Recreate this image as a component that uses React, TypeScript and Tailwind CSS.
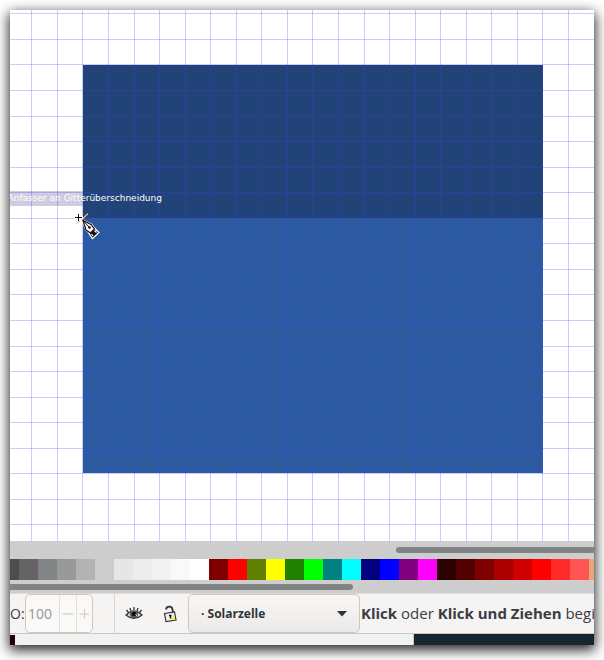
import { Minus, Plus } from "lucide-react";

const PITCH = 25.5556;
const columns = Array.from({ length: 80 }, (_, i) => Math.floor(21.8 + i * PITCH));
const rows = Array.from({ length: 60 }, (_, i) => Math.floor(3.8 + i * PITCH));

const swatches = [
  "#666366", "#808484", "#999999", "#b3b3b3", "#cccccc", "#e6e6e5",
  "#ececec", "#f1f3f2", "#f9f9fc", "#ffffff", "#800000", "#ff0000", "#628000",
  "#ffff00", "#208000", "#00ff00", "#008080", "#00ffff", "#000080", "#0000ff",
  "#800080", "#ff00ff", "#2b0000", "#550000", "#800000", "#aa0000", "#d00000",
  "#ff0000", "#ff2a2a", "#ff5555", "#e9a678", "#deaa87", "#ffccaa",
];

function PenCursor() {
  return (
    <svg className="absolute top-[202px] left-[62px]" width="30" height="30" viewBox="0 0 30 30" aria-hidden="true">
      <path d="M2 5.500h9M6.500 1v9" stroke="#fff" strokeWidth="3" />
      <path d="M3 5.500h7M6.500 2v7" stroke="#1a0808" strokeWidth="1" />
      <path d="M11 6.500l5-5" stroke="#d8c860" strokeWidth="1.200" />
      <path d="M5 11.500l3-3" stroke="#999" strokeWidth="1" />
      <path d="M11 9L19 12.500L23 17.500L19 21.500L14.500 18Z" fill="#fff" stroke="#fff" strokeWidth="2.500" />
      <path d="M22.500 16.500L27 20.500L20.500 26.500L17 21.500Z" fill="#1a0808" stroke="#fff" strokeWidth="1.200" />
      <path d="M11 8.500L19 12.500L22.500 17L18.500 21L14 18Z" fill="#fff" stroke="#1a0808" strokeWidth="1.200" />
      <path d="M11 8.500l6.500 7" stroke="#1a0808" strokeWidth="1" />
      <circle cx="17.500" cy="15.500" r="1.300" fill="#1a0808" />
      <path d="M22.500 18.500l2 2.200M19.500 22l1.500 2" stroke="#fff" strokeWidth="1.200" />
    </svg>
  );
}

function Canvas() {
  return (
    <div className="relative min-h-0 flex-1 overflow-hidden bg-white">
      <svg className="absolute inset-0 h-full w-full" shapeRendering="crispEdges" aria-label="Zeichenfläche">
        <rect x="0" y="181" width="152" height="15" fill="#cfcce0" />
        <rect x="73" y="55" width="460" height="153" fill="#214378" />
        <rect x="73" y="208" width="460" height="255" fill="#2c5aa0" />
        <g fill="#3f3fff" fillOpacity="0.27">
          {columns.map((x) => (
            <rect key={`c${x}`} x={x} y="0" width="1" height="100%" />
          ))}
          {rows.map((y) => (
            <rect key={`r${y}`} x="0" y={y} width="100%" height="1" />
          ))}
        </g>
      </svg>
      <div className="absolute top-[181px] left-0 flex h-[15px] w-[152px] justify-end overflow-hidden whitespace-nowrap font-['DejaVu_Sans',sans-serif] text-[9px] leading-[14px] text-white">
        Anfasser an Gitterüberschneidung
      </div>
      <PenCursor />
    </div>
  );
}

function EyeIcon() {
  return (
    <svg width="18" height="16" viewBox="0 0 18 16" fill="none" aria-hidden="true">
      <path d="M1 9Q9 1 17 9Q9 16 1 9Z" fill="#d9dcdc" stroke="#2e3436" strokeWidth="1.200" />
      <circle cx="9" cy="8.500" r="4" fill="#555b5d" />
      <circle cx="9" cy="8" r="2.300" fill="#250404" />
      <path d="M10.500 8.500l1.500 1" stroke="#fff" strokeWidth="1" />
      <path d="M9 4V1M6 5L5 2M12 5l1-3M3.500 6.500L1.500 4M14.500 6.500l2-2.500" stroke="#2e3436" strokeWidth="1.300" />
    </svg>
  );
}

function LockIcon() {
  return (
    <svg width="14" height="18" viewBox="0 0 14 18" fill="none" aria-hidden="true">
      <path d="M3 4.500C3.500 1 9 .5 9.500 4.500L10 8" stroke="#2e3436" strokeWidth="1.800" />
      <path d="M1.500 8.500l10-1.500 1.500 8-10 1.500z" fill="#eeeeec" stroke="#2e3436" strokeWidth="1.200" />
      <path d="M8 14.500l3.500-4 .8 4-4 .8z" fill="#fce94f" />
      <path d="M6 10.500h2.500M7.300 10l.4 3.500" stroke="#250404" strokeWidth="1.400" />
    </svg>
  );
}

function Palette() {
  return (
    <div className="flex h-[21px] shrink-0 overflow-hidden">
      <button aria-label="#4d4d4d" className="w-[9px] shrink-0 bg-[#4d4d4d]" />
      {swatches.map((color, i) => (
        <button key={i} aria-label={color} className="w-[19px] shrink-0" style={{ backgroundColor: color }} />
      ))}
    </div>
  );
}

function StatusBar() {
  return (
    <div className="flex h-10 shrink-0 items-center overflow-hidden border-t border-[#dedcda] bg-[#f5f4f3] text-[#3b3b46]">
      <label htmlFor="opacity" className="w-[15px] shrink-0 text-[14px]">
        O:
      </label>
      <div className="flex h-[39px] w-[68px] shrink-0 overflow-hidden rounded-[5px] border border-[#cdc7c2] bg-[#faf9f8] text-[#929595]">
        <input id="opacity" defaultValue="100" className="w-[33px] bg-transparent pl-[2px] text-[14px] outline-none" />
        <button aria-label="Verringern" className="flex w-[17px] items-center justify-center border-l border-[#e2dfdc] text-[#d3d3d2]">
          <Minus size={16} strokeWidth={2} />
        </button>
        <button aria-label="Erhöhen" className="flex w-4 items-center justify-center border-l border-[#e2dfdc] text-[#d3d3d2]">
          <Plus size={16} strokeWidth={2} />
        </button>
      </div>
      <div className="ml-[21px] h-full w-px shrink-0 bg-[#d8d4d0]" />
      <button aria-label="Ebene sichtbar" className="ml-[9px] flex w-5 shrink-0 justify-center">
        <EyeIcon />
      </button>
      <button aria-label="Ebene sperren" className="ml-[18px] flex w-4 shrink-0 justify-center">
        <LockIcon />
      </button>
      <div className="relative ml-[10px] w-[172px] shrink-0">
        <select
          aria-label="Ebene"
          className="h-[39px] w-full appearance-none rounded-[5px] border border-[#cdc7c2] bg-linear-to-b from-[#f8f7f6] to-[#eceae8] pl-3 text-[12px] font-bold text-[#2e3436] outline-none"
        >
          <option>· Solarzelle</option>
        </select>
        <svg className="pointer-events-none absolute top-[17px] right-[13px]" width="10" height="6" viewBox="0 0 10 6" aria-hidden="true">
          <path d="M0 0h10L5 5.500z" fill="#2e3436" />
        </svg>
      </div>
      <p className="ml-px whitespace-nowrap text-[15px]">
        <b>Klick</b> oder <b>Klick und Ziehen</b> begin
      </p>
    </div>
  );
}

export default function App() {
  return (
    <main className="h-screen overflow-hidden bg-white px-[10px] pt-[10px] pb-[15px] font-['Open_Sans','Noto_Sans',sans-serif]">
      <div className="flex h-full flex-col shadow-[0_4px_12px_1px_#000000dd]">
        <Canvas />
        <div className="flex h-[18px] shrink-0 items-center bg-[#cdcdcd]">
          <div className="ml-[386px] h-[6px] flex-1 rounded-l-full bg-[#808484]" />
        </div>
        <Palette />
        <div className="h-[13px] shrink-0 border-t border-[#d6ceca] bg-[#cdcdcd] pt-[3px]">
          <div className="h-[6px] w-[343px] rounded-r-full bg-[#808484]" />
        </div>
        <StatusBar />
        <div className="flex h-3 shrink-0 border-t border-[#c9c5c1] bg-[#f0f2f1]">
          <div className="mt-px w-[5px] bg-[#2b0000]" />
          <div className="w-[399px] border-r border-[#c9c5c1]" />
          <div className="flex-1 bg-[#17262e]" />
        </div>
      </div>
    </main>
  );
}
